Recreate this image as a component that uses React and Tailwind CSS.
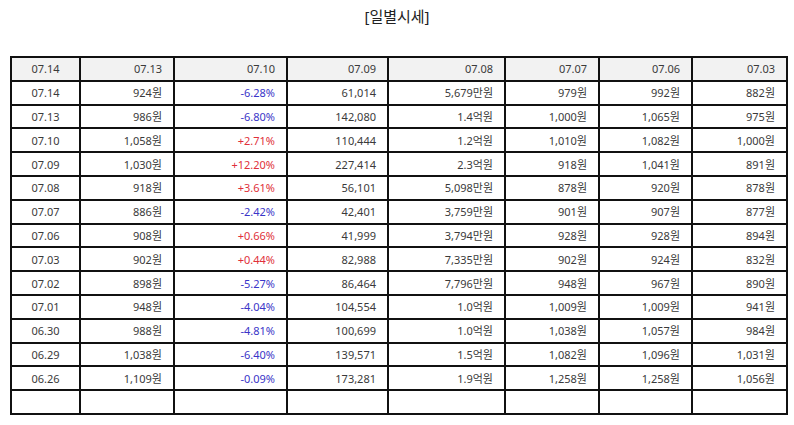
const headers = ["07.14", "07.13", "07.10", "07.09", "07.08", "07.07", "07.06", "07.03"];

const rows = [
  ["07.14", "924원", "-6.28%", "61,014", "5,679만원", "979원", "992원", "882원"],
  ["07.13", "986원", "-6.80%", "142,080", "1.4억원", "1,000원", "1,065원", "975원"],
  ["07.10", "1,058원", "+2.71%", "110,444", "1.2억원", "1,010원", "1,082원", "1,000원"],
  ["07.09", "1,030원", "+12.20%", "227,414", "2.3억원", "918원", "1,041원", "891원"],
  ["07.08", "918원", "+3.61%", "56,101", "5,098만원", "878원", "920원", "878원"],
  ["07.07", "886원", "-2.42%", "42,401", "3,759만원", "901원", "907원", "877원"],
  ["07.06", "908원", "+0.66%", "41,999", "3,794만원", "928원", "928원", "894원"],
  ["07.03", "902원", "+0.44%", "82,988", "7,335만원", "902원", "924원", "832원"],
  ["07.02", "898원", "-5.27%", "86,464", "7,796만원", "948원", "967원", "890원"],
  ["07.01", "948원", "-4.04%", "104,554", "1.0억원", "1,009원", "1,009원", "941원"],
  ["06.30", "988원", "-4.81%", "100,699", "1.0억원", "1,038원", "1,057원", "984원"],
  ["06.29", "1,038원", "-6.40%", "139,571", "1.5억원", "1,082원", "1,096원", "1,031원"],
  ["06.26", "1,109원", "-0.09%", "173,281", "1.9억원", "1,258원", "1,258원", "1,056원"],
  ["", "", "", "", "", "", "", ""],
];

const widths = ["w-[69px]", "w-[94px]", "w-[113px]", "w-[101px]", "w-[117px]", "w-[94px]", "w-[93px]", "w-[95px]"];

const changeColor = (v) => {
  if (v.startsWith("+")) return "text-[#e0303a]";
  if (v.startsWith("-")) return "text-[#3a35c8]";
  return "";
};

const App = () => {
  return (
    <div className="w-[794px] h-[425px] bg-white text-[#3a3a3a] font-['Noto_Sans','Noto_Sans_CJK_KR',sans-serif]">
      <h1 className="pt-[5px] h-[56px] text-center text-[15px] text-[#222]">[일별시세]</h1>
      <table className="ml-[10px] w-[776px] table-fixed border-collapse border-2 border-[#111] text-[11px]">
        <colgroup>
          {widths.map((w, i) => (
            <col key={i} className={w} />
          ))}
        </colgroup>
        <thead>
          <tr className="h-[23.8px] bg-[#f2f2f2]">
            {headers.map((h, i) => (
              <th
                key={i}
                className={`border-2 border-[#111] font-normal ${i === 0 ? "text-center" : "text-right pr-[11px]"}`}
              >
                {h}
              </th>
            ))}
          </tr>
        </thead>
        <tbody>
          {rows.map((row, r) => (
            <tr key={r} className="h-[23.8px]">
              {row.map((cell, i) => (
                <td
                  key={i}
                  className={`border-2 border-[#111] leading-none ${i === 0 ? "text-center" : "text-right pr-[11px]"} ${i === 2 ? changeColor(cell) : ""}`}
                >
                  {cell}
                </td>
              ))}
            </tr>
          ))}
        </tbody>
      </table>
    </div>
  );
};

export default App;
